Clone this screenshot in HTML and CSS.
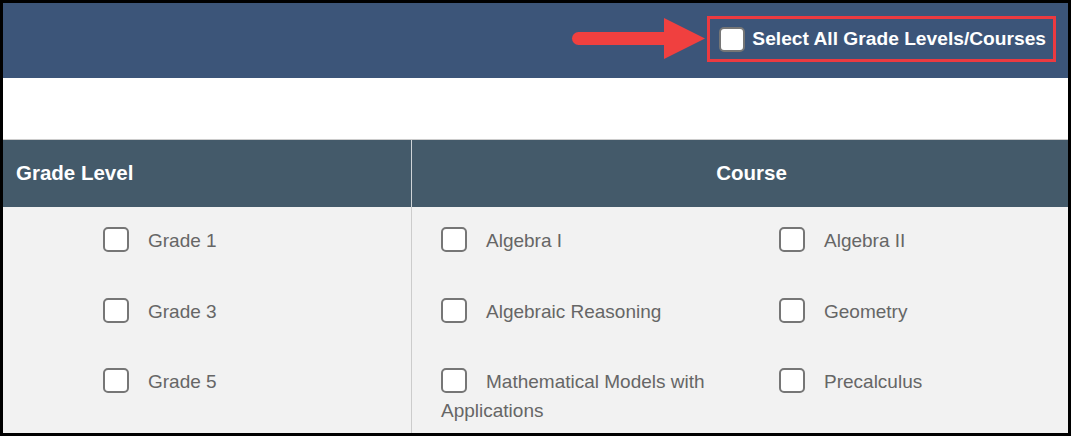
FILE: index.html
```html
<html>
<head>
  <meta charset="UTF-8">
  <meta name="viewport" content="width=device-width, initial-scale=1.0">
  <title>Grade Levels / Courses</title>
  <link rel="stylesheet" href="styles.css">
</head>
<body>

  <div class="frame">
    <div class="topbar">
      <svg class="arrow" width="136" height="42" viewBox="0 0 136 42">
        <line x1="8.5" y1="20.5" x2="96" y2="20.5" stroke="#f0403f" stroke-width="13" stroke-linecap="round"/>
        <polygon points="94,0 135,20.5 94,41" fill="#f0403f"/>
      </svg>
      <label class="select-all">
        <input type="checkbox" class="box">
        <span>Select All Grade Levels/Courses</span>
      </label>
    </div>

    <div class="spacer"></div>

    <div class="table">
      <div class="th grade-head">Grade Level</div>
      <div class="th course-head">Course</div>

      <div class="grades">
        <label class="item"><input type="checkbox" class="box">Grade 1</label>
        <label class="item"><input type="checkbox" class="box">Grade 3</label>
        <label class="item"><input type="checkbox" class="box">Grade 5</label>
      </div>

      <div class="courses">
        <label class="item"><input type="checkbox" class="box">Algebra I</label>
        <label class="item"><input type="checkbox" class="box">Algebra II</label>
        <label class="item"><input type="checkbox" class="box">Algebraic Reasoning</label>
        <label class="item"><input type="checkbox" class="box">Geometry</label>
        <label class="item"><input type="checkbox" class="box">Mathematical Models with Applications</label>
        <label class="item"><input type="checkbox" class="box">Precalculus</label>
      </div>
    </div>
  </div>

</body>
</html>
```

FILE: styles.css
```css
body {
  margin: 0;
  font-family: 'Liberation Sans', Arial, sans-serif;
  background: #000;
}

.frame {
  box-sizing: border-box;
  width: 1071px;
  height: 436px;
  border: 3px solid #000;
  background: #fff;
  overflow: hidden;
}

.topbar {
  height: 75px;
  box-sizing: border-box;
  background: #3c5579;
  display: flex;
  align-items: center;
  justify-content: flex-end;
  padding: 0 12px 3px 0;
}

.arrow {
  display: block;
  margin-right: 1px;
}

.select-all {
  box-sizing: border-box;
  height: 46px;
  border: 3px solid #ec3a40;
  padding: 0 7px 0 9px;
  display: flex;
  align-items: center;
  gap: 7px;
  color: #fff;
  font-weight: bold;
  font-size: 19.2px;
}

.box {
  appearance: none;
  -webkit-appearance: none;
  box-sizing: border-box;
  width: 26px;
  height: 25px;
  margin: 0;
  border: 2px solid #767676;
  border-radius: 5px;
  background: #fff;
}

.spacer {
  height: 61px;
  border-bottom: 1px solid #cccccc;
}

.table {
  display: grid;
  grid-template-columns: 409px 1fr;
  background: #f2f2f2;
}

.th {
  height: 67px;
  padding-bottom: 1px;
  box-sizing: border-box;
  display: flex;
  align-items: center;
  background: #445a6a;
  color: #fff;
  font-weight: bold;
  font-size: 20.5px;
}

.grade-head {
  padding-left: 13px;
  border-right: 1px solid #cfd4d8;
}

.course-head {
  justify-content: center;
  padding-left: 12px;
}

.grades {
  border-right: 1px solid #cccccc;
  padding-left: 100px;
  height: 300px;
}

.courses {
  display: grid;
  grid-template-columns: 338px 300px;
  align-content: start;
  padding-left: 29px;
}

.item {
  display: block;
  padding: 19px 0 22.5px;
  font-size: 19px;
  line-height: 29px;
  color: #666;
}

.courses .item {
  padding-right: 30px;
}

.item .box {
  vertical-align: middle;
  margin: -4px 19px 0 0;
}
```
